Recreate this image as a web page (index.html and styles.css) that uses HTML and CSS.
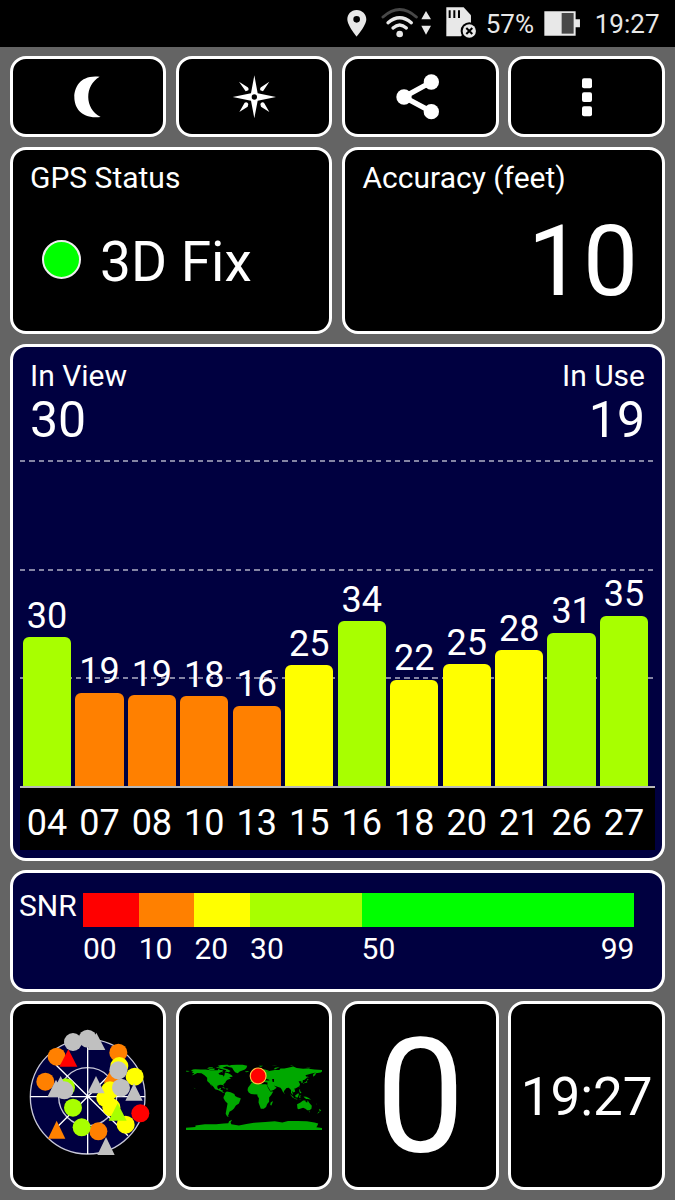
FILE: index.html
```html
<!DOCTYPE html>
<html lang="en">
<head>
    <meta charset="UTF-8">
    <meta name="viewport" content="width=device-width, initial-scale=1.0">
    <title>GPS Status</title>
    <link rel="stylesheet" href="styles.css">
</head>
<body>

    <div class="status-bar">
        <svg class="pin" width="19.3" height="47" viewBox="32 0 58 141">
            <path fill="#e8e8e8" fill-rule="evenodd" d="M61 30C44 30 33 43 33 58C33 77 61 110 61 110C61 110 90 77 90 58C90 43 78 30 61 30ZM61 48A10 10 0 1 1 61 68A10 10 0 1 1 61 48Z"/>
        </svg>
        <svg class="wifi" width="51" height="47" viewBox="136 0 153 141">
            <path d="M142 51Q192 6 242 51" fill="none" stroke="#484848" stroke-width="9" stroke-linecap="round"/>
            <path d="M157 68Q192 38 227 68M172 84Q192 66 212 84" fill="none" stroke="#e8e8e8" stroke-width="10" stroke-linecap="round"/>
            <circle cx="192" cy="102" r="10" fill="#e8e8e8"/>
            <path d="M271 33L286 58H257ZM257 77H286L271 104Z" fill="#e8e8e8"/>
        </svg>
        <svg class="sd" width="30.3" height="47" viewBox="330 0 91 141">
            <path d="M331 22H383L405 46V70L375 109H331Z" fill="#e8e8e8"/>
            <path d="M341 31V54M355 31V54M369 31V54" stroke="#000" stroke-width="6"/>
            <circle cx="400" cy="93" r="26" fill="#000"/>
            <circle cx="400" cy="93" r="20" fill="#e8e8e8"/>
            <path d="M391 84L409 102M409 84L391 102" stroke="#000" stroke-width="6"/>
        </svg>
        <span class="percent">57%</span>
        <svg class="battery" width="36.3" height="47" viewBox="623 0 109 141">
            <path d="M624 34H718V58H731V82H718V107H624Z" fill="#e8e8e8"/>
            <path d="M676 39H712V101H676Z" fill="#484848"/>
        </svg>
        <span>19:27</span>
    </div>

    <div class="dashboard">

        <div class="row four">
            <button class="card">
                <svg width="60" height="50" viewBox="173 80 180 150">
                    <path fill="#fff" d="M298 94C242 87 222 124 222 155C222 188 244 222 301 215C252 190 252 120 298 94Z"/>
                </svg>
            </button>
            <button class="card">
                <svg width="60" height="50" viewBox="671 80 180 150">
                    <path fill="#fff" d="M762 90L772 144L827 155L772 166L762 219L752 166L697 155L752 144Z"/>
                    <path fill="#fff" d="M716 109L742 126Q746 129 744 135L736 138ZM807 109L782 126Q778 129 780 135L788 138ZM717 200L733 172Q741 169 744 176L742 184ZM807 200L791 172Q783 169 780 176L782 184Z"/>
                    <circle cx="762" cy="155" r="8" fill="#000"/>
                </svg>
            </button>
            <button class="card">
                <svg width="60" height="50" viewBox="165 80 180 150">
                    <path d="M289 110L207 155L289 199" fill="none" stroke="#fff" stroke-width="16"/>
                    <circle cx="289" cy="110" r="23" fill="#fff"/>
                    <circle cx="207" cy="155" r="23" fill="#fff"/>
                    <circle cx="289" cy="199" r="23" fill="#fff"/>
                </svg>
            </button>
            <button class="card">
                <svg width="60" height="50" viewBox="666 80 180 150">
                    <rect x="741" y="99" width="30" height="30" rx="6" fill="#fff"/>
                    <rect x="741" y="141" width="30" height="29" rx="6" fill="#fff"/>
                    <rect x="741" y="183" width="30" height="30" rx="6" fill="#fff"/>
                </svg>
            </button>
        </div>

        <div class="row two">
            <div class="card info">
                <div class="label">GPS Status</div>
                <div class="fix"><span class="dot"></span>3D Fix</div>
            </div>
            <div class="card info">
                <div class="label">Accuracy (feet)</div>
                <div class="accuracy">10</div>
            </div>
        </div>

        <div class="card navy signal">
            <div class="counts">
                <div>
                    <div class="label">In View</div>
                    <div class="count">30</div>
                </div>
                <div class="right">
                    <div class="label">In Use</div>
                    <div class="count">19</div>
                </div>
            </div>
            <div class="plot">
                <div class="lines"><i></i><i></i><i></i></div>
                <div class="bars">
                    <div class="sat"><span>30</span><div class="bar lime" style="height: 149px"></div></div>
                    <div class="sat"><span>19</span><div class="bar orange" style="height: 93.5px"></div></div>
                    <div class="sat"><span>19</span><div class="bar orange" style="height: 91px"></div></div>
                    <div class="sat"><span>18</span><div class="bar orange" style="height: 90px"></div></div>
                    <div class="sat"><span>16</span><div class="bar orange" style="height: 80.5px"></div></div>
                    <div class="sat"><span>25</span><div class="bar yellow" style="height: 121px"></div></div>
                    <div class="sat"><span>34</span><div class="bar lime" style="height: 165px"></div></div>
                    <div class="sat"><span>22</span><div class="bar yellow" style="height: 106.5px"></div></div>
                    <div class="sat"><span>25</span><div class="bar yellow" style="height: 122px"></div></div>
                    <div class="sat"><span>28</span><div class="bar yellow" style="height: 136px"></div></div>
                    <div class="sat"><span>31</span><div class="bar lime" style="height: 153.5px"></div></div>
                    <div class="sat"><span>35</span><div class="bar lime" style="height: 170.5px"></div></div>
                </div>
            </div>
            <div class="axis">
                <span>04</span><span>07</span><span>08</span><span>10</span><span>13</span><span>15</span>
                <span>16</span><span>18</span><span>20</span><span>21</span><span>26</span><span>27</span>
            </div>
        </div>

        <div class="card navy snr">
            <div class="label">SNR</div>
            <div class="scale">
                <div><div class="seg red"></div>00</div>
                <div><div class="seg orange"></div>10</div>
                <div><div class="seg yellow"></div>20</div>
                <div><div class="seg lime"></div>30</div>
                <div><div class="seg green"></div><div class="ends"><span>50</span><span>99</span></div></div>
            </div>
        </div>

        <div class="row four">
            <div class="card tile sky">
                <svg width="140" height="150" viewBox="0 0 420 450">
                    <circle cx="203" cy="230" r="172" fill="#000040" stroke="#c8c8d8" stroke-width="4"/>
                    <circle cx="203" cy="230" r="87" fill="none" stroke="#c8c8d8" stroke-width="4"/>
                    <path d="M203 58V402M31 230H375M108 135L324 347M108 325L296 137" stroke="#fff" stroke-width="4"/>
                    <circle cx="203" cy="230" r="5" fill="#fff"/>
                    <g fill="#ff8000">
                        <circle cx="110" cy="110" r="27"/><circle cx="76" cy="185" r="27"/><circle cx="295" cy="98" r="27"/>
                        <circle cx="235" cy="334" r="27"/>
                        <path d="M110 302L136 356H84Z"/><path d="M277 140L303 188H251Z"/>
                    </g>
                    <path d="M145 88L172 140H118Z" fill="#ff0000"/>
                    <g fill="#a8ff00">
                        <circle cx="138" cy="202" r="27"/><circle cx="159" cy="263" r="27"/><circle cx="185" cy="322" r="27"/>
                    </g>
                    <g fill="#ffff00">
                        <circle cx="298" cy="138" r="27"/><circle cx="344" cy="170" r="27"/><circle cx="270" cy="211" r="27"/>
                        <circle cx="256" cy="234" r="27"/><circle cx="274" cy="262" r="27"/><circle cx="317" cy="314" r="27"/>
                    </g>
                    <path d="M293 250L320 302H266Z" fill="#a8ff00"/>
                    <circle cx="361" cy="280" r="27" fill="#ff0000"/>
                    <g fill="#c0c0c0">
                        <circle cx="159" cy="66" r="27"/><circle cx="203" cy="56" r="27"/><path d="M229 38L256 90H202Z"/>
                        <path d="M108 179L134 231H82ZM122 168L148 220H96Z"/><circle cx="133" cy="211" r="27"/>
                        <path d="M228 168L254 220H202Z"/><circle cx="295" cy="151" r="27"/><circle cx="303" cy="203" r="27"/>
                        <path d="M342 190L368 242H316ZM258 351L284 405H232Z"/>
                    </g>
                </svg>
            </div>
            <div class="card tile">
                <!-- drawn in degrees: x is longitude, y is minus latitude -->
                <svg class="world" width="136" height="68" viewBox="-180 -90 360 180">
                    <g fill="#00a800">
                        <path d="M-167 -66L-162 -70L-156 -71L-141 -70L-128 -70L-115 -68L-108 -68L-96 -68L-94 -72L-90 -69L-82 -69L-85 -64L-94 -60L-92 -57L-82 -55L-80 -51L-78 -56L-77 -62L-70 -61L-65 -59L-61 -56L-56 -52L-60 -50L-66 -50L-61 -46L-70 -43L-74 -40L-76 -35L-81 -31L-80 -25L-83 -29L-90 -30L-97 -27L-97 -22L-94 -18L-90 -21L-87 -21L-89 -16L-83 -15L-83 -10L-77 -9L-82 -8L-86 -11L-94 -15L-103 -18L-107 -24L-114 -31L-111 -24L-117 -33L-124 -40L-124 -48L-131 -55L-139 -60L-150 -61L-158 -57L-165 -54L-158 -60L-165 -62L-160 -65Z"/>
                        <path d="M-125 -74L-116 -73L-104 -73L-105 -69L-117 -69ZM-120 -77L-108 -77L-110 -75L-121 -75ZM-95 -74L-88 -74L-82 -74L-70 -71L-62 -66L-67 -63L-77 -65L-73 -68L-84 -71ZM-96 -80L-87 -82L-70 -83L-65 -81L-78 -77L-90 -76ZM-100 -77L-80 -76L-82 -74L-98 -75ZM-86 -65L-81 -64L-84 -62Z"/>
                        <path d="M-73 -78L-60 -82L-45 -83L-30 -83L-18 -80L-20 -74L-24 -70L-38 -65L-43 -60L-50 -63L-54 -68L-58 -75ZM-24 -65L-15 -66L-14 -64L-21 -63Z"/>
                        <path d="M-85 -22L-77 -20L-75 -19L-80 -23ZM-74 -20L-68 -19L-70 -17L-74 -18Z"/>
                        <path d="M-77 -8L-72 -12L-62 -10L-52 -5L-50 0L-44 3L-35 6L-36 10L-40 20L-48 25L-53 33L-58 38L-65 42L-67 48L-69 53L-65 55L-71 54L-75 47L-73 36L-70 20L-76 14L-81 5L-80 1L-77 -4Z"/>
                        <path d="M-17 -15L-16 -22L-10 -30L-6 -36L10 -37L11 -33L20 -31L33 -31L37 -22L43 -12L51 -12L46 -3L40 4L40 15L35 21L32 29L26 34L18 34L12 17L13 6L9 0L9 -4L-8 -5L-14 -9ZM44 17L50 13L49 18L46 25L43 24Z"/>
                        <path d="M-9 -37L-9 -43L-2 -44L-4 -48L3 -51L8 -54L9 -58L13 -55L20 -55L22 -60L30 -60L22 -63L25 -66L19 -62L17 -57L12 -60L5 -60L12 -65L18 -69L27 -71L40 -67L34 -65L44 -67L55 -69L67 -69L70 -73L80 -73L90 -75L104 -78L113 -74L130 -72L140 -73L160 -70L180 -69L180 -65L177 -62L164 -60L162 -55L156 -51L157 -58L164 -62L150 -59L136 -55L141 -49L134 -43L129 -42L129 -36L126 -34L125 -39L118 -39L122 -31L120 -26L112 -21L107 -20L109 -12L105 -9L100 -13L104 -2L98 -8L98 -16L92 -22L86 -21L80 -14L78 -8L73 -18L70 -22L60 -25L52 -28L56 -25L60 -22L52 -16L44 -13L35 -28L36 -36L27 -37L27 -40L22 -37L19 -41L12 -45L18 -39L15 -38L9 -44L3 -42L-1 -37Z"/>
                        <path d="M-5 -50L1 -51L0 -54L-3 -59L-6 -57L-4 -54ZM-10 -52L-6 -52L-6 -55L-10 -54ZM52 -71L56 -75L68 -77L57 -71ZM12 -80L24 -80L18 -77ZM46 -81L62 -81L55 -80ZM95 -80L105 -79L100 -81ZM138 -75L150 -75L145 -73ZM142 -54L144 -49L142 -46ZM141 -45L145 -43L140 -41ZM140 -41L141 -36L132 -34L131 -32L130 -34L137 -37ZM80 -9L82 -7L80 -6ZM121 -25L122 -24L121 -22ZM109 -20L111 -19L109 -18Z"/>
                        <path d="M95 -5L104 2L106 6L102 4ZM106 6L115 8L114 9L106 7ZM109 -1L117 -7L119 -5L116 4L110 3ZM120 -1L125 -1L122 1L123 5L120 5ZM120 -18L122 -17L122 -13L126 -8L122 -7L120 -12ZM131 1L138 2L145 5L151 10L143 8L138 8L133 4ZM118 9L126 9L122 10Z"/>
                        <path d="M114 22L122 18L130 12L136 12L137 16L141 17L142 11L146 18L153 26L152 34L147 38L141 38L136 34L130 31L118 35L115 33ZM145 41L148 41L147 44ZM172 34L178 38L174 42ZM172 41L173 44L167 47Z"/>
                        <path d="M-180 90V84L-155 82L-155 78L-130 75L-100 75L-80 73L-68 72L-66 67L-58 63L-62 70L-60 75L-40 78L-20 74L0 71L30 69L55 67L75 70L90 66L115 66L140 67L160 70L170 73L168 78L165 83L180 85V90Z"/>
                        <path d="M-180 -67L-170 -66L-175 -64L-180 -65ZM-160 -22L-155 -20L-156 -19ZM164 20L167 22L165 22Z"/>
                    </g>
                    <path d="M30 -46L40 -43L41 -41L30 -41ZM48 -45L53 -45L53 -37L49 -38Z" fill="#000"/>
                    <circle cx="11" cy="-53" r="21" fill="#ff0000" stroke="#ffc840" stroke-width="3"/>
                </svg>
            </div>
            <div class="card tile speed">0</div>
            <div class="card tile clock">19:27</div>
        </div>

    </div>

</body>
</html>
```
FILE: styles.css
```css
*{
    box-sizing: border-box;
}
body{
    margin: 0;
    background-color: #646464;
    color: white;
    font-family: Roboto, sans-serif;
    font-size: 30px;
    line-height: 34px;
}
svg{
    display: block;
    flex-shrink: 0;
    overflow: visible;
}

/* status bar */
.status-bar{
    height: 47px;
    background-color: black;
    color: #e8e8e8;
    display: flex;
    align-items: center;
    justify-content: flex-end;
    padding-right: 15.5px;
    font-size: 26px;
    line-height: 45px;
}
.status-bar span{
    padding-top: 2px;
}
.wifi{
    margin-left: 15.5px;
}
.sd{
    margin-left: 13.5px;
}
.percent{
    margin-left: 9.5px;
}
.battery{
    margin-left: 10px;
    margin-right: 14.5px;
}

/* cards */
.dashboard{
    display: grid;
    grid-template-rows: 81px 187.6px 517px 121.5px 189px;
    gap: 9.6px;
    padding: 9px 10px 0 9.5px;
}
.row{
    display: grid;
    gap: 9.6px;
}
.four{
    grid-template-columns: repeat(4, 1fr);
}
.two{
    grid-template-columns: repeat(2, 1fr);
}
.card{
    min-width: 0;
    background-color: black;
    border: 3px solid white;
    border-radius: 16px;
}
button.card{
    display: flex;
    align-items: center;
    justify-content: center;
    padding: 0;
}
.navy{
    background-color: #000040;
}
.info{
    padding: 11px 24px 0 17.5px;
}
.fix{
    display: flex;
    align-items: center;
    margin-top: 37px;
    font-size: 55px;
    line-height: 60px;
}
.dot{
    width: 39px;
    height: 39px;
    margin: 0 19px 4px 12px;
    border: 2px solid #eee;
    border-radius: 50%;
    background-color: #00ff00;
}
.accuracy{
    margin-top: 12px;
    font-size: 98px;
    line-height: 110px;
    text-align: right;
}

/* signal chart */
.signal{
    padding: 12px 7px 0 7.5px;
}
.counts{
    display: flex;
    justify-content: space-between;
    padding: 0 10px;
}
.right{
    text-align: right;
}
.count{
    margin-top: 2px;
    font-size: 50px;
    line-height: 50px;
}
.plot{
    position: relative;
    height: 326px;
    margin-top: 15.7px;
}
.lines{
    position: absolute;
    inset: 0 2.5px 0 0;
    display: flex;
    flex-direction: column;
    gap: 106.3px;
}
.lines i{
    height: 2px;
    background: repeating-linear-gradient(90deg, #8484a4 0 5.2px, transparent 5.2px 9.375px);
}
.bars{
    position: relative;
    display: flex;
    align-items: flex-end;
    gap: 4.2px;
    height: 100%;
    padding: 0 6.8px 0 2.8px;
}
.sat{
    flex: 1;
    font-size: 36px;
    line-height: 40px;
    text-align: center;
}
.sat span{
    display: block;
    margin-bottom: 1.5px;
}
.bar{
    border-radius: 6px 6px 0 0;
}
.axis{
    display: flex;
    gap: 4.2px;
    height: 64px;
    padding: 15px 6.8px 0 2.8px;
    border-top: 2px solid #b8b8b8;
    background-color: black;
    font-size: 36px;
    line-height: 40px;
    text-align: center;
}
.axis span{
    flex: 1;
}

/* snr legend */
.snr{
    display: flex;
    padding: 16px 27.5px 0 6.5px;
}
.snr .label{
    width: 64px;
}
.scale{
    flex: 1;
    display: grid;
    grid-template-columns: 10fr 10fr 10fr 20fr 49fr;
    margin-top: 4px;
}
.seg{
    height: 34px;
    margin-bottom: 5px;
}
.ends{
    display: flex;
    justify-content: space-between;
}
.red{
    background-color: #ff0000;
}
.orange{
    background-color: #ff8000;
}
.yellow{
    background-color: #ffff00;
}
.lime{
    background-color: #a8ff00;
}
.green{
    background-color: #00ff00;
}

/* bottom tiles */
.tile{
    display: flex;
    align-items: center;
    justify-content: center;
}
.sky{
    padding: 0 0 2px 4px;
}
.speed{
    padding-top: 3px;
    font-size: 159px;
    line-height: 150px;
}
.clock{
    padding-top: 2px;
    font-size: 53px;
}
```
